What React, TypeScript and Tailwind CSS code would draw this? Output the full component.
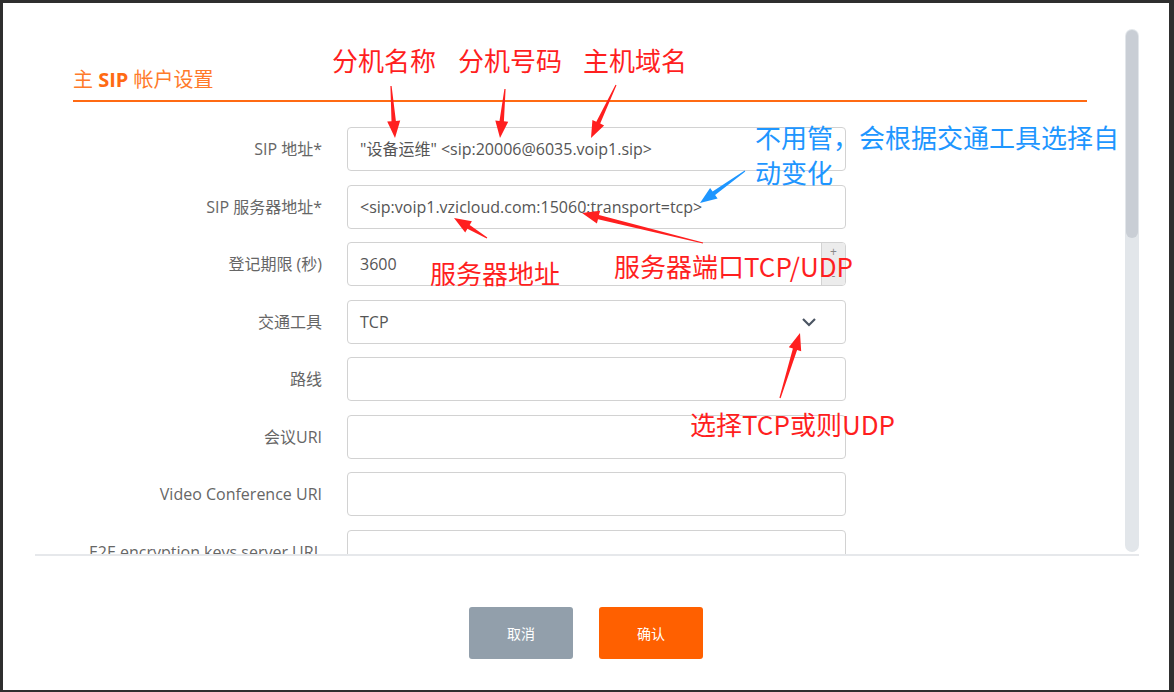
import React from 'react';

const ui = { fontFamily: '"Open Sans", "Noto Sans CJK SC", sans-serif' };
const note = { fontFamily: '"Noto Sans CJK SC", "Liberation Sans", sans-serif' };

type Pt = [number, number];

function arrowPoints(tail: Pt, tip: Pt, head = 17, half = 6.5) {
  const dx = tip[0] - tail[0];
  const dy = tip[1] - tail[1];
  const len = Math.hypot(dx, dy);
  const ux = dx / len;
  const uy = dy / len;
  const nx = -uy;
  const ny = ux;
  const bx = tip[0] - ux * head;
  const by = tip[1] - uy * head;
  const p = (x: number, y: number) => `${x.toFixed(1)},${y.toFixed(1)}`;
  return [
    p(tail[0] + nx * 0.6, tail[1] + ny * 0.6),
    p(bx + nx * 2.2, by + ny * 2.2),
    p(bx + nx * half, by + ny * half),
    p(tip[0], tip[1]),
    p(bx - nx * half, by - ny * half),
    p(bx - nx * 2.2, by - ny * 2.2),
    p(tail[0] - nx * 0.6, tail[1] - ny * 0.6),
  ].join(' ');
}

const redArrows: [Pt, Pt][] = [
  [[391, 86], [395, 138]],
  [[505, 89], [500, 138]],
  [[616, 85], [591, 138]],
  [[487, 238], [454, 218]],
  [[703, 243], [582, 213]],
  [[780, 398], [800, 333]],
];

const rows = [
  { label: 'SIP 地址*', value: '"设备运维" <sip:20006@6035.voip1.sip>' },
  { label: 'SIP 服务器地址*', value: '<sip:voip1.vzicloud.com:15060;transport=tcp>' },
  { label: '登记期限 (秒)', value: '3600', spin: true },
  { label: '交通工具', value: 'TCP', select: true },
  { label: '路线', value: '' },
  { label: '会议URI', value: '' },
  { label: 'Video Conference URI', value: '' },
  { label: 'E2E encryption keys server URL', value: '' },
];

function Field({ value, spin, select }: { value: string; spin?: boolean; select?: boolean }) {
  return (
    <div className="relative flex h-[44px] w-[499px] items-center overflow-hidden rounded-[4px] border border-[#d2d2d2] bg-white">
      <span className="whitespace-nowrap pl-[12px] text-[16px] text-[#555]">{value}</span>
      {spin && (
        <div className="absolute right-0 top-0 flex h-full w-[24px] flex-col items-center justify-between border-l border-[#d2d2d2] bg-[#ececec] py-[2px] text-[12px] leading-[14px] text-[#888]">
          <span>+</span>
          <span>-</span>
        </div>
      )}
      {select && (
        <svg className="absolute right-[28px] top-[15px]" width="16" height="12" viewBox="0 0 16 12">
          <path d="M2 3 L8 9 L14 3" fill="none" stroke="#4b5563" strokeWidth="2.2" />
        </svg>
      )}
    </div>
  );
}

export default function App() {
  return (
    <div className="relative h-[692px] w-[1174px] overflow-hidden bg-[#2f2f2f] pb-[2px] pl-[3px] pr-[5px] pt-[3px]" style={ui}>
      <div className="flex h-full w-full flex-col bg-white">
        <div className="ml-[32px] mr-[30px] mt-[26px] flex h-[527px] border-b-2 border-[#e6e8eb]">
          <div className="flex-1 overflow-hidden px-[38px] pt-[37px]">
            <div className="border-b-2 border-[#ff6a13] pb-[6px] text-[20px] leading-[28px] text-[#ff7a2a]">
              主 <span className="font-bold text-[#ff6a13]">SIP</span> 帐户设置
            </div>
            <div className="mt-[25px] flex flex-col gap-[13.5px]">
              {rows.map((r) => (
                <div key={r.label} className="flex items-center gap-[25px]">
                  <div className="w-[249px] shrink-0 whitespace-nowrap text-right text-[16px] text-[#666]">{r.label}</div>
                  <Field value={r.value} spin={r.spin} select={r.select} />
                </div>
              ))}
            </div>
          </div>
          <div className="mb-[2px] w-[14px] rounded-full bg-[#e2e6ea] pt-[1px]">
            <div className="mx-auto h-[208px] w-[12px] rounded-full bg-[#c9ced5]" />
          </div>
        </div>
        <div className="mt-[51px] flex justify-center gap-[26px]">
          <button className="h-[52px] w-[104px] rounded-[3px] bg-[#929fab] text-[14px] text-white">取消</button>
          <button className="h-[52px] w-[104px] rounded-[3px] bg-[#ff6000] text-[14px] text-white">确认</button>
        </div>
      </div>

      <div className="pointer-events-none absolute inset-0 text-[26px] leading-[26px]" style={note}>
        <div className="absolute left-[332px] top-[47px] text-[#ff1f1f]">分机名称</div>
        <div className="absolute left-[458px] top-[47px] text-[#ff1f1f]">分机号码</div>
        <div className="absolute left-[583px] top-[47px] text-[#ff1f1f]">主机域名</div>
        <div className="absolute left-[755px] top-[124px] whitespace-nowrap text-[#1e96ff]">不用管，会根据交通工具选择自</div>
        <div className="absolute left-[755px] top-[159px] text-[#1e96ff]">动变化</div>
        <div className="absolute left-[430px] top-[260px] text-[#ff1f1f]">服务器地址</div>
        <div className="absolute left-[614px] top-[253px] whitespace-nowrap text-[#ff1f1f]">服务器端口TCP/UDP</div>
        <div className="absolute left-[690px] top-[411px] whitespace-nowrap text-[#ff1f1f]">选择TCP或则UDP</div>
        <svg className="absolute left-0 top-0" width="1174" height="692">
          {redArrows.map(([a, b], i) => (
            <polygon key={i} points={arrowPoints(a, b)} fill="#ff1f1f" />
          ))}
          <polygon points={arrowPoints([745, 171], [700, 203])} fill="#1e96ff" />
        </svg>
      </div>
    </div>
  );
}
